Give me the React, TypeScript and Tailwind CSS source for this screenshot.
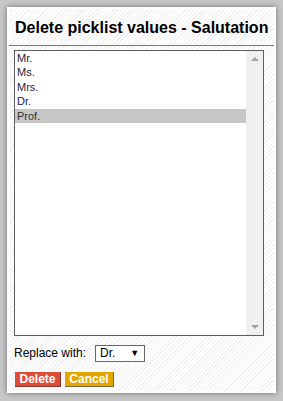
import React from 'react';

const values = ['Mr.', 'Ms.', 'Mrs.', 'Dr.', 'Prof.'];

export default function App() {
  return (
    <div className="w-[283px] h-[401px] bg-[#c8c8c8] p-[7px] font-['Liberation_Sans',Arial,sans-serif]">
      <div className="w-[269px] h-[386px] border-2 border-white shadow-[0_0_6px_rgba(0,0,0,0.45)] bg-[repeating-linear-gradient(135deg,#ffffff_0px,#ffffff_2px,#f0f0f0_2px,#f0f0f0_3px)] flex flex-col">
        {/* Title */}
        <h2 className="text-[16px] font-bold text-black leading-none pt-[11px] pl-[6px] pb-[9px] whitespace-nowrap">
          Delete picklist values - Salutation
        </h2>
        <div className="h-px bg-[#7b7b5e]" />

        {/* List box */}
        <div className="ml-[5px] mt-[4px] w-[250px] h-[286px] border border-[#5e5e5e] bg-white flex">
          <ul className="flex-1 text-[11px] text-[#1b2540]">
            {values.map((v) => (
              <li
                key={v}
                className={`h-[14.4px] leading-[14.4px] pl-[2px] ${v === 'Prof.' ? 'bg-[#c6c6c6] text-[#333]' : ''}`}
              >
                {v}
              </li>
            ))}
          </ul>
          <div className="w-[17px] bg-[#f0f0f0] flex flex-col items-center justify-between py-[6px]">
            <span className="w-0 h-0 border-x-[4px] border-x-transparent border-b-[4px] border-b-[#a3a3a3]" />
            <span className="w-0 h-0 border-x-[4px] border-x-transparent border-t-[4px] border-t-[#a3a3a3]" />
          </div>
        </div>

        {/* Replace with */}
        <div className="flex items-center mt-[8px] ml-[5px] text-[12px] text-black">
          <span className="mr-[9px]">Replace with:</span>
          <div className="w-[50px] h-[17px] border border-[#666] bg-white flex items-center justify-between pl-[4px] pr-[5px]">
            <span className="text-[12px]">Dr.</span>
            <span className="text-[9px] leading-none">▼</span>
          </div>
        </div>

        {/* Buttons */}
        <div className="flex gap-[4px] mt-[10px] ml-[6px]">
          <button className="h-[15px] w-[46px] bg-[#dd4b39] border-r border-b border-[#8a3a2c] text-white font-bold text-[12px] leading-none">
            Delete
          </button>
          <button className="h-[15px] w-[49px] bg-[#e3a600] border-r border-b border-[#7a6a3a] text-white font-bold text-[12px] leading-none">
            Cancel
          </button>
        </div>
      </div>
    </div>
  );
}
